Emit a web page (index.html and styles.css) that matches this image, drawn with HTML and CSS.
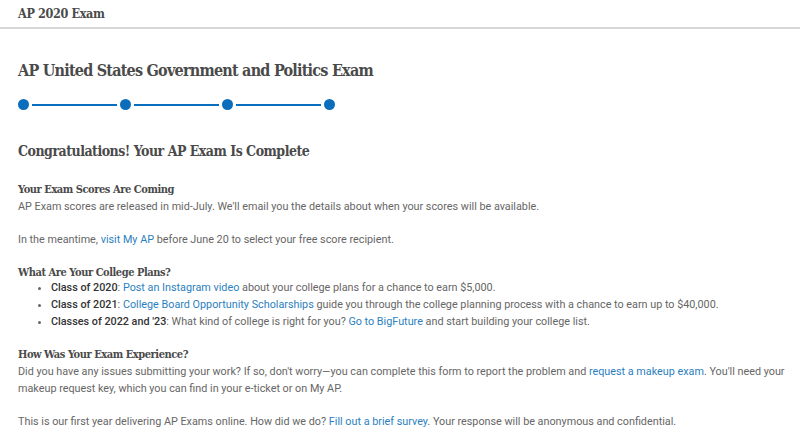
FILE: index.html
```html
<!DOCTYPE html>
<html lang="en">
<head>
  <meta charset="UTF-8">
  <title>AP 2020 Exam</title>
  <link rel="stylesheet" href="styles.css">
</head>
<body>
  <div class="topbar">AP 2020 Exam</div>
  <div class="main">
    <h1 class="exam-title">AP United States Government and Politics Exam</h1>
    <div class="stepper">
      <span class="dot"></span><span class="line"></span>
      <span class="dot"></span><span class="line"></span>
      <span class="dot"></span><span class="line"></span>
      <span class="dot"></span>
    </div>

    <h2 class="done-title">Congratulations! Your AP Exam Is Complete</h2>

    <div class="section first">
      <h3>Your Exam Scores Are Coming</h3>
      <p>AP Exam scores are released in mid-July. We'll email you the details about when your scores will be available.</p>
      <p class="gap">In the meantime, <a href="#">visit My AP</a> before June 20 to select your free score recipient.</p>
    </div>

    <div class="section">
      <h3>What Are Your College Plans?</h3>
      <ul>
        <li><strong>Class of 2020</strong>: <a href="#">Post an Instagram video</a> about your college plans for a chance to earn $5,000.</li>
        <li><strong>Class of 2021</strong>: <a href="#">College Board Opportunity Scholarships</a> guide you through the college planning process with a chance to earn up to $40,000.</li>
        <li><strong>Classes of 2022 and '23</strong>: What kind of college is right for you? <a href="#">Go to BigFuture</a> and start building your college list.</li>
      </ul>
    </div>

    <div class="section">
      <h3>How Was Your Exam Experience?</h3>
      <p>Did you have any issues submitting your work? If so, don't worry—you can complete this form to report the problem and <a href="#">request a makeup exam</a>. You'll need your makeup request key, which you can find in your e-ticket or on My AP.</p>
      <p class="gap">This is our first year delivering AP Exams online. How did we do? <a href="#">Fill out a brief survey</a>. Your response will be anonymous and confidential.</p>
    </div>
  </div>
</body>
</html>
```

FILE: styles.css
```css
body {
  margin: 0;
  background: #fff;
  font-family: Roboto, Arial, sans-serif;
  font-size: 10.8px;
  color: #666;
}
h1, h2, h3, .topbar {
  font-family: "DejaVu Serif Condensed", "DejaVu Serif", serif;
  font-stretch: condensed;
  color: #4a4a4a;
  margin: 0;
}
.topbar {
  height: 27px;
  padding-left: 18px;
  border-bottom: 2px solid #d6d6d6;
  font-weight: bold;
  font-size: 12.5px;
  letter-spacing: -0.35px;
  line-height: 27px;
}
.main {
  padding: 30px 8px 0 18px;
}
.exam-title {
  font-size: 16px;
  letter-spacing: -0.77px;
  line-height: 24px;
}
.stepper {
  display: flex;
  align-items: center;
  margin-top: 16px;
  width: 317px;
}
.dot {
  width: 11px;
  height: 11px;
  border-radius: 50%;
  background: #0a6ebd;
  flex: none;
}
.line {
  flex: 1;
  height: 2px;
  background: #0a6ebd;
  margin: 0 3px;
}
.done-title {
  font-size: 14px;
  letter-spacing: -0.5px;
  line-height: 20px;
  margin-top: 31px;
}
.section {
  margin-top: 16px;
}
.section.first {
  margin-top: 20px;
}
.section h3 {
  font-size: 11px;
  letter-spacing: -0.45px;
  line-height: 17px;
}
p {
  margin: 0;
  line-height: 17px;
}
p.gap {
  margin-top: 16px;
}
ul {
  margin: -2px 0 0 0;
  padding-left: 33px;
  line-height: 17px;
}
strong {
  color: #333;
  font-weight: 500;
}
a {
  color: #2b7fc0;
  text-decoration: none;
}
```
